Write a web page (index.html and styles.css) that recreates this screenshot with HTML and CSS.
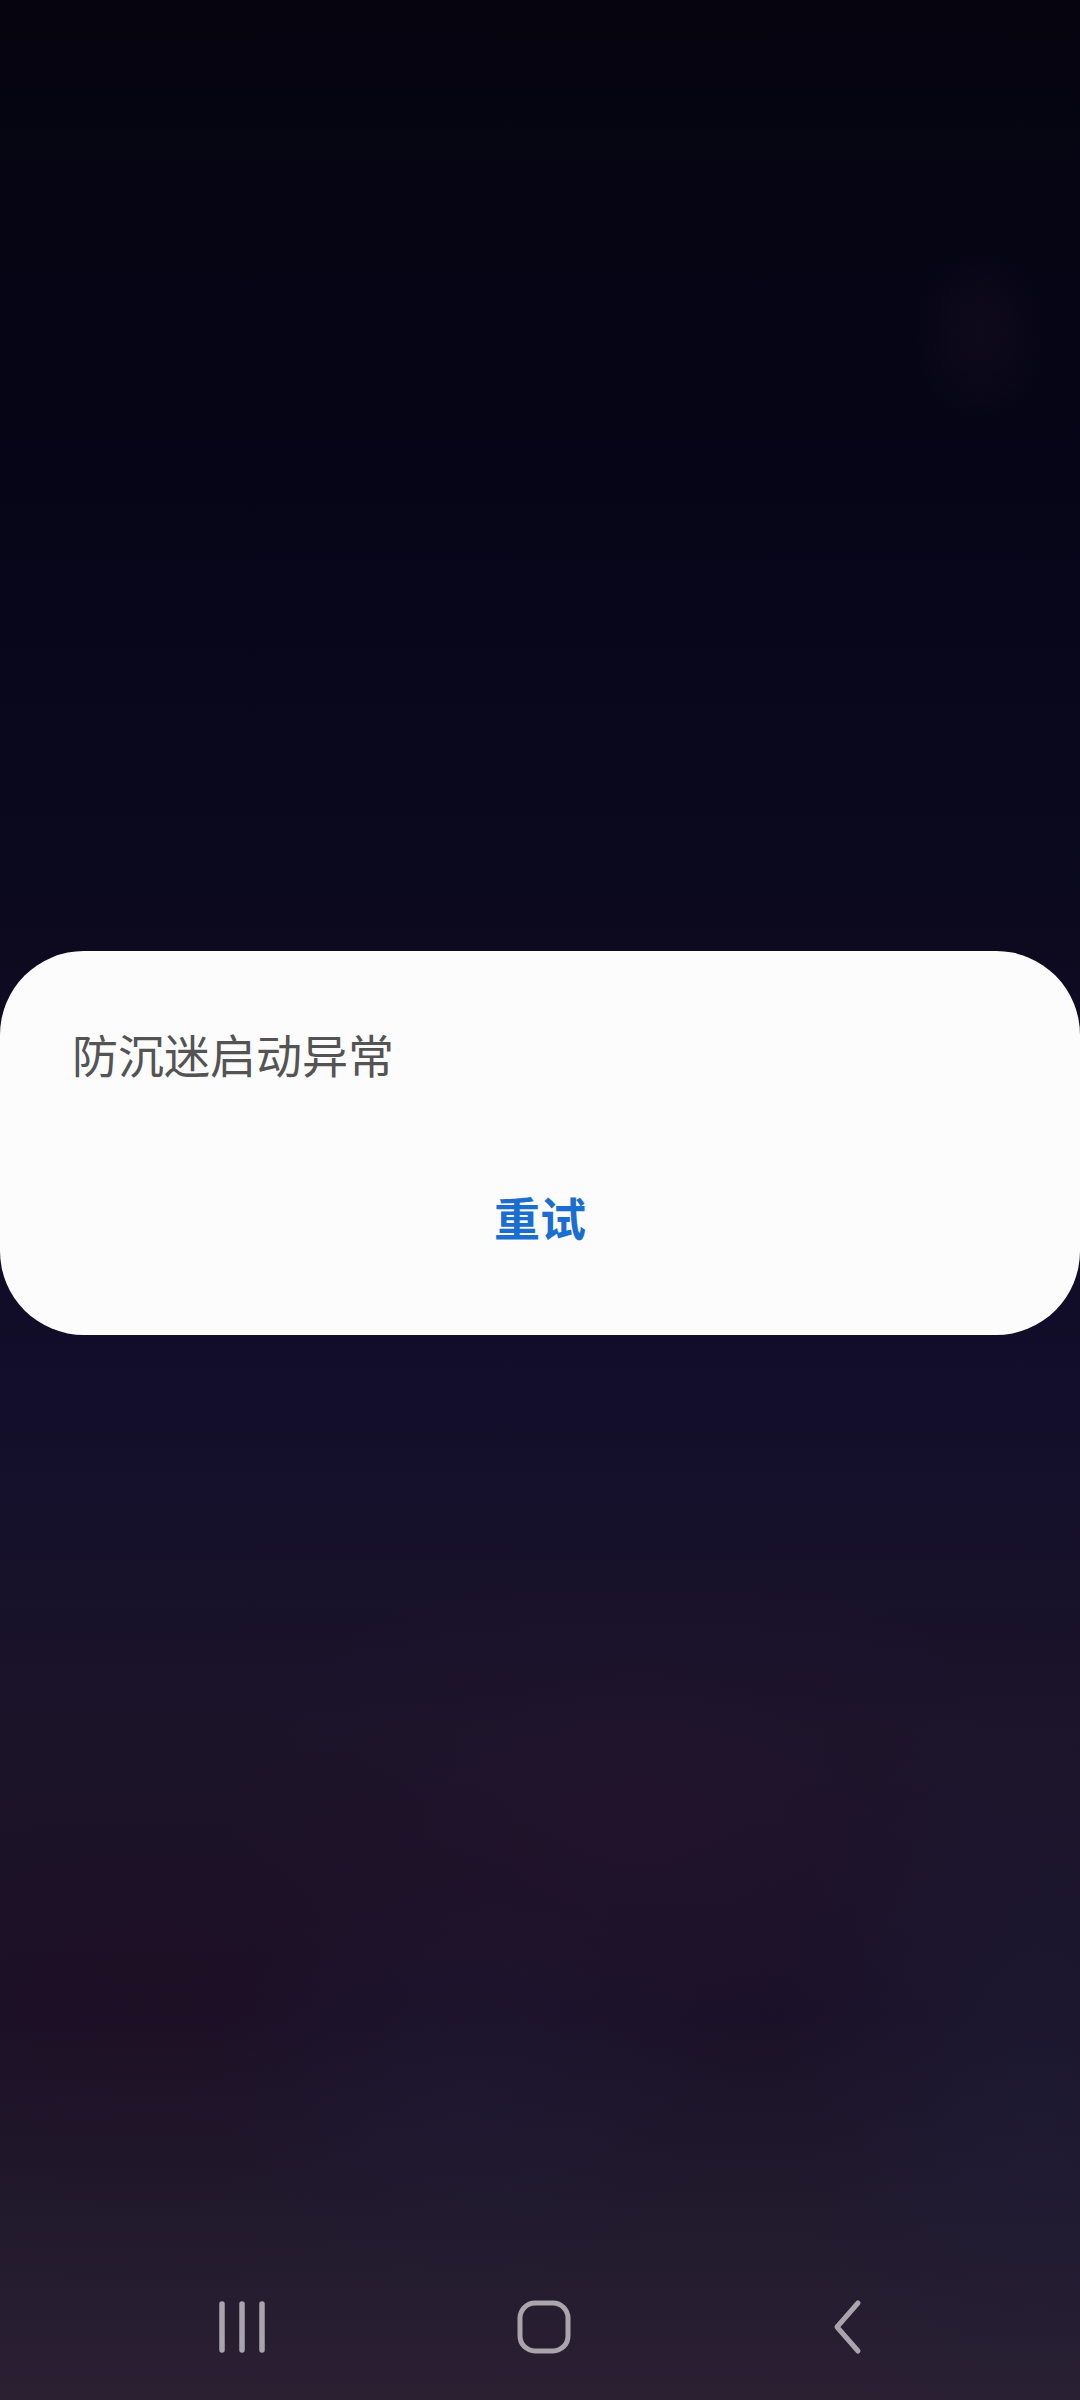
FILE: index.html
```html
<!DOCTYPE html>
<html lang="zh-CN">
<head>
    <meta charset="UTF-8">
    <meta name="viewport" content="width=device-width, initial-scale=1.0">
    <title>防沉迷</title>
    <link rel="stylesheet" href="styles.css">
</head>
<body>
<div class="screen">
    <div class="dialog">
        <p class="dialog-title">防沉迷启动异常</p>
        <div class="dialog-actions">
            <button class="retry">重试</button>
        </div>
    </div>

    <!-- 导航栏 -->
    <div class="navbar">
        <div class="nav-item">
            <svg width="50" height="52" viewBox="0 0 50 52">
                <path d="M5 3v46M25 3v46M45 3v46" stroke="#aaa4ad" stroke-width="5.5" stroke-linecap="round" fill="none"/>
            </svg>
        </div>
        <div class="nav-item">
            <svg width="56" height="56" viewBox="0 0 56 56">
                <rect x="4" y="4" width="48" height="48" rx="15" stroke="#aaa4ad" stroke-width="5" fill="none"/>
            </svg>
        </div>
        <div class="nav-item">
            <svg width="40" height="56" viewBox="0 0 40 56">
                <path d="M32 4L11 28l21 24" stroke="#aaa4ad" stroke-width="5" stroke-linecap="round" stroke-linejoin="round" fill="none"/>
            </svg>
        </div>
    </div>
</div>
</body>
</html>
```

FILE: styles.css
```css
body {
    margin: 0;
    font-family: "Noto Sans CJK SC", "Noto Sans", sans-serif;
}
.screen {
    height: 2400px;
    display: flex;
    flex-direction: column;
    background:
        radial-gradient(ellipse 70px 90px at 980px 330px, rgba(35, 22, 40, 0.3), transparent),
        radial-gradient(ellipse 420px 260px at 640px 1820px, rgba(45, 20, 50, 0.3), transparent),
        radial-gradient(ellipse 260px 220px at 470px 2090px, rgba(30, 30, 60, 0.35), transparent),
        radial-gradient(ellipse 260px 420px at 1040px 2080px, rgba(30, 30, 58, 0.5), transparent),
        radial-gradient(ellipse 500px 300px at 150px 2000px, rgba(35, 14, 35, 0.35), transparent),
        linear-gradient(180deg, #05040f 0%, #07061a 25%, #0d0a20 40%, #120e2b 58%, #1b1429 72%, #1a1127 84%, #211a2d 92%, #2b2032 100%);
}
.dialog {
    margin-top: 951px;
    height: 384px;
    box-sizing: border-box;
    background-color: #fcfcfc;
    border-radius: 84px;
    padding: 69px 72px 0 72px;
}
.dialog-title {
    margin: 0;
    font-size: 46px;
    line-height: 66px;
    color: #545454;
}
.dialog-actions {
    margin-top: 97px;
    display: flex;
    justify-content: center;
}
.retry {
    border: none;
    background: none;
    padding: 0;
    font-family: "Noto Sans CJK SC", sans-serif;
    font-size: 46px;
    font-weight: bold;
    line-height: 66px;
    color: #1a6ecf;
}
.navbar {
    margin-top: auto;
    height: 146px;
    padding-left: 8px;
    display: grid;
    grid-template-columns: repeat(3, 302px);
    justify-content: center;
    align-items: center;
}
.nav-item {
    display: flex;
    justify-content: center;
    align-items: center;
}
.nav-item svg {
    display: block;
}
```
